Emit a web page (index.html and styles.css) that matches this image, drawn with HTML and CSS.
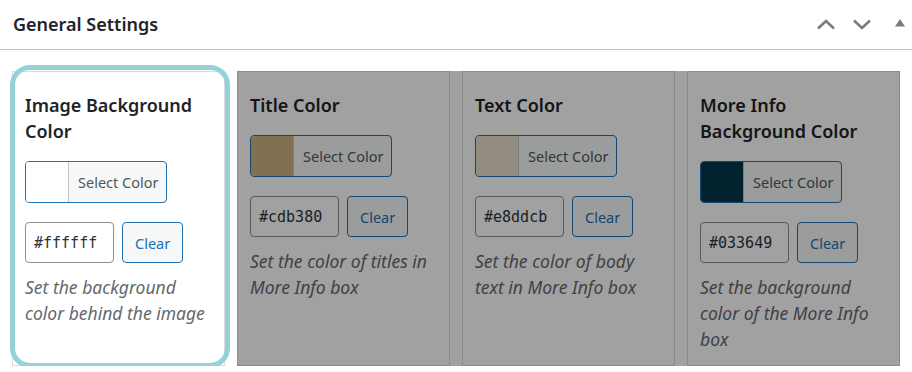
FILE: index.html
```html
<!DOCTYPE html>
<html lang="en">
<head>
    <meta charset="UTF-8">
    <meta name="viewport" content="width=device-width, initial-scale=1.0">
    <title>General Settings</title>
    <link rel="stylesheet" href="styles.css">
</head>
<body>
    <div class="postbox">
        <div class="postbox-header">
            <h2>General Settings</h2>
            <div class="handle-actions">
                <button class="handle-btn" aria-label="Move up">
                    <svg width="20" height="11" viewBox="0 0 20 11"><path d="M2 9.5 L10 2 L18 9.5" fill="none" stroke="#787c82" stroke-width="2.6"/></svg>
                </button>
                <button class="handle-btn" aria-label="Move down">
                    <svg width="20" height="11" viewBox="0 0 20 11"><path d="M2 1.5 L10 9 L18 1.5" fill="none" stroke="#787c82" stroke-width="2.6"/></svg>
                </button>
                <button class="handle-btn toggle" aria-label="Toggle panel">
                    <svg width="10" height="8" viewBox="0 0 10 8"><path d="M5 0 L10 7.5 L0 7.5 Z" fill="#787c82"/></svg>
                </button>
            </div>
        </div>

        <div class="inside">
            <div class="color-grid">
                <div class="color-field is-highlighted">
                    <h3>Image Background Color</h3>
                    <button class="color-result"><span class="swatch" style="background-color: #ffffff;"></span><span class="color-result-text">Select Color</span></button>
                    <div class="color-input-wrap">
                        <input type="text" class="color-input" value="#ffffff">
                        <button class="clear-btn">Clear</button>
                    </div>
                    <p class="description">Set the background color behind the image</p>
                </div>

                <div class="dimmed">
                    <div class="color-field">
                        <h3>Title Color</h3>
                        <button class="color-result"><span class="swatch" style="background-color: #cdb380;"></span><span class="color-result-text">Select Color</span></button>
                        <div class="color-input-wrap">
                            <input type="text" class="color-input" value="#cdb380">
                            <button class="clear-btn">Clear</button>
                        </div>
                        <p class="description">Set the color of titles in More Info box</p>
                    </div>

                    <div class="color-field">
                        <h3>Text Color</h3>
                        <button class="color-result"><span class="swatch" style="background-color: #e8ddcb;"></span><span class="color-result-text">Select Color</span></button>
                        <div class="color-input-wrap">
                            <input type="text" class="color-input" value="#e8ddcb">
                            <button class="clear-btn">Clear</button>
                        </div>
                        <p class="description">Set the color of body text in More Info box</p>
                    </div>

                    <div class="color-field">
                        <h3>More Info Background Color</h3>
                        <button class="color-result"><span class="swatch" style="background-color: #033649;"></span><span class="color-result-text">Select Color</span></button>
                        <div class="color-input-wrap">
                            <input type="text" class="color-input" value="#033649">
                            <button class="clear-btn">Clear</button>
                        </div>
                        <p class="description">Set the background color of the More Info box</p>
                    </div>
                </div>
            </div>
        </div>
    </div>
</body>
</html>
```

FILE: styles.css
```css
body {
    margin: 0;
    font-family: "Noto Sans", "Open Sans", sans-serif;
    color: #1d2327;
    background: #fff;
}
.postbox {
    background: #fff;
}
.postbox-header {
    display: flex;
    align-items: center;
    justify-content: space-between;
    height: 49px;
    border-bottom: 1px solid #c3c4c7;
}
.postbox-header h2 {
    margin: 0;
    padding-left: 13px;
    font-size: 18px;
    font-weight: 600;
    line-height: 1.4;
}
.handle-actions {
    display: flex;
    align-items: center;
    gap: 16px;
    margin-right: 7px;
}
.handle-btn {
    display: flex;
    align-items: center;
    padding: 0;
    border: 0;
    background: none;
    height: 20px;
}
.handle-btn.toggle {
    margin-left: 7px;
    margin-top: -4px;
}
.inside {
    padding: 21px 12px 0 12px;
}
.color-grid {
    display: flex;
    gap: 12px;
}
.color-field {
    position: relative;
    box-sizing: border-box;
    width: calc((100% - 36px) / 4);
    padding: 20px 12px 13px;
    border: 1px solid #dcdcde;
    background: #fff;
}
.dimmed {
    position: relative;
    flex: 1;
    display: flex;
    gap: 12px;
}
.dimmed .color-field {
    width: auto;
    flex: 1;
}
.dimmed::after {
    content: "";
    position: absolute;
    inset: 0;
    background: rgba(0, 0, 0, 0.37);
}
.is-highlighted::before {
    content: "";
    position: absolute;
    top: -7px;
    left: -3px;
    right: -6px;
    bottom: -3px;
    border: 5px solid #94d2d8;
    border-radius: 20px;
    pointer-events: none;
}
.color-field h3 {
    margin: 0 0 17px;
    font-size: 18px;
    font-weight: 600;
    line-height: 26px;
}
.color-result {
    display: flex;
    height: 42px;
    padding: 0;
    border: 1px solid #2271b1;
    border-radius: 4px;
    background: #f6f7f7;
    overflow: hidden;
    font-family: inherit;
}
.swatch {
    width: 42px;
    border-right: 1px solid #c3c4c7;
}
.color-result-text {
    padding: 0 8px 0 9px;
    line-height: 40px;
    font-size: 14.5px;
    color: #50575e;
}
.color-input-wrap {
    display: flex;
    gap: 8px;
    margin-top: 19px;
}
.color-input {
    box-sizing: border-box;
    width: 89px;
    height: 41px;
    padding: 0 8px;
    border: 1px solid #8c8f94;
    border-radius: 4px;
    font-family: "DejaVu Sans Mono", "Liberation Mono", monospace;
    font-size: 15px;
    color: #2c3338;
}
.clear-btn {
    height: 41px;
    padding: 0 12px;
    border: 1px solid #2271b1;
    border-radius: 4px;
    background: #f6f7f7;
    color: #2271b1;
    font-family: inherit;
    font-size: 14.5px;
}
.description {
    margin: 11px 0 0;
    font-size: 17.5px;
    font-style: italic;
    line-height: 26px;
    color: #646970;
}
```
